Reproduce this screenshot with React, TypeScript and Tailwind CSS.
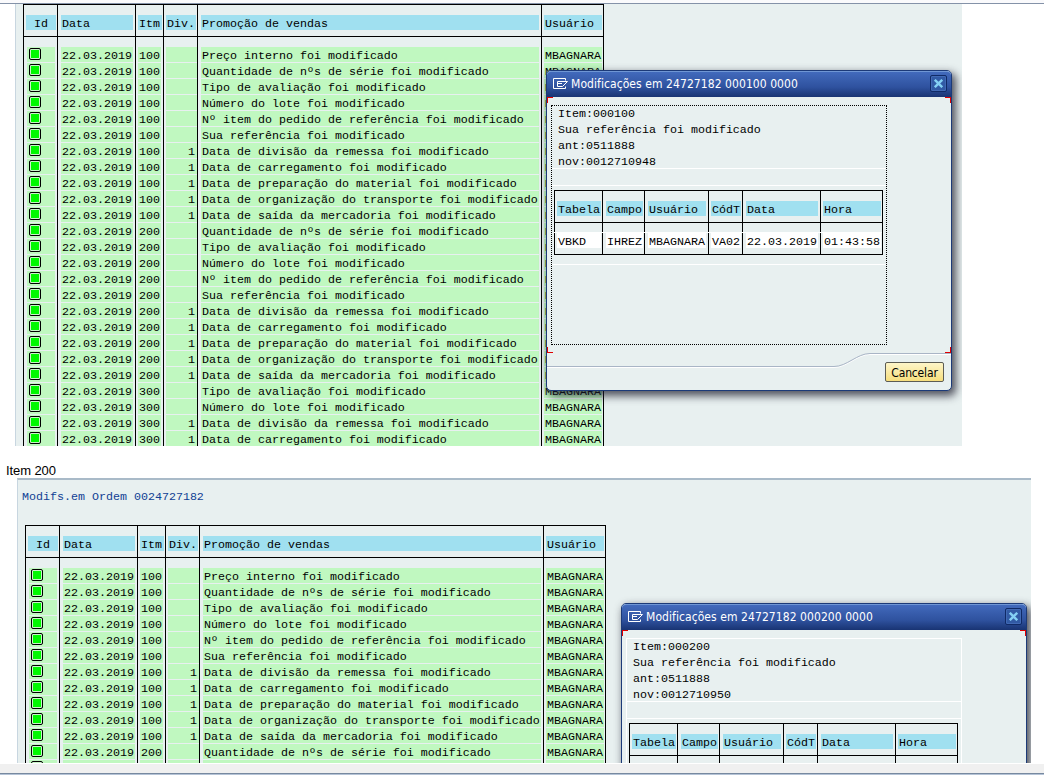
import React from "react";

type Change = { item: string; div: string; text: string };

const GENERAL = [
  "Preço interno foi modificado",
  "Quantidade de nºs de série foi modificado",
  "Tipo de avaliação foi modificado",
  "Número do lote foi modificado",
  "Nº item do pedido de referência foi modificado",
  "Sua referência foi modificado",
];

const SCHEDULE = [
  "Data de divisão da remessa foi modificado",
  "Data de carregamento foi modificado",
  "Data de preparação do material foi modificado",
  "Data de organização do transporte foi modificado",
  "Data de saída da mercadoria foi modificado",
];

const rowsFor = (item: string, general: string[], schedule: string[]): Change[] => [
  ...general.map((text) => ({ item, div: "", text })),
  ...schedule.map((text) => ({ item, div: "1", text })),
];

const ALL: Change[] = [
  ...rowsFor("100", GENERAL, SCHEDULE),
  ...rowsFor("200", GENERAL.slice(1), SCHEDULE),
  ...rowsFor("300", GENERAL.slice(2, 4), SCHEDULE.slice(0, 2)),
];

const MONO =
  "font-['Liberation_Mono','Courier_New',monospace] text-[11.667px] leading-[15px] whitespace-pre text-black";
const UI = "font-['DejaVu_Sans_Condensed','DejaVu_Sans',sans-serif] [font-stretch:condensed]";

function Light() {
  return (
    <div className="-mt-px ml-[2px] flex h-3 w-3 items-center justify-center rounded-[2px] border border-black bg-[#c8f4c8]">
      <div className="h-2 w-2 bg-[#00f800]" />
    </div>
  );
}

type Column = {
  title: string;
  width: string;
  head: string;
  cell: string;
  value: (row: Change) => React.ReactNode;
};

const COLUMNS: Column[] = [
  { title: "Id", width: "w-[34px]", head: "ml-[2px] w-[30px] pl-2", cell: "ml-[3px] w-7", value: () => <Light /> },
  { title: "Data", width: "w-[78px]", head: "ml-[3px] w-[72px] pl-px", cell: "ml-[3px] w-[72px] pl-px", value: () => "22.03.2019" },
  { title: "Itm", width: "w-[28px]", head: "ml-[2px] w-6 pl-px", cell: "ml-[2px] w-[23px] pl-px", value: (r) => r.item },
  { title: "Div.", width: "w-[34px]", head: "ml-[2px] w-[30px] pl-px", cell: "ml-[2px] w-[31px] pr-[2px] text-right", value: (r) => r.div },
  { title: "Promoção de vendas", width: "w-[344px]", head: "ml-[3px] w-[338px] pl-px", cell: "ml-[3px] w-[338px] pl-px", value: (r) => r.text },
  { title: "Usuário", width: "w-[62px]", head: "ml-[2px] w-[58px] pl-px", cell: "ml-[2px] w-[58px] pl-px", value: () => "MBAGNARA" },
];

function ChangeTable({ rows }: { rows: Change[] }) {
  return (
    <div className={`flex w-[581px] border-t border-r border-black ${MONO}`}>
      {COLUMNS.map((c) => (
        <div key={c.title} className={`shrink-0 border-l border-black ${c.width}`}>
          <div className="h-8 border-b border-black pt-[10px]">
            <div className={`h-[15px] bg-[#a0e0f0] ${c.head}`}>
              <div className="pt-[2px]">{c.title}</div>
            </div>
          </div>
          <div className="pt-[10px]">
            {rows.map((r, i) => (
              <div key={i} className={`mb-px h-[15px] bg-[#c0f8c0] ${c.cell}`}>
                <div className="pt-[2px]">{c.value(r)}</div>
              </div>
            ))}
          </div>
        </div>
      ))}
    </div>
  );
}

const DETAIL = [
  { title: "Tabela", value: "VBKD", width: "w-[48px]", cell: "ml-[2px] w-[44px]" },
  { title: "Campo", value: "IHREZ", width: "w-[42px]", cell: "ml-[3px] w-[37px]" },
  { title: "Usuário", value: "MBAGNARA", width: "w-[64px]", cell: "ml-[3px] w-[58px]" },
  { title: "CódT", value: "VA02", width: "w-[34px]", cell: "ml-[2px] w-[30px]" },
  { title: "Data", value: "22.03.2019", width: "w-[78px]", cell: "ml-[3px] w-[72px]" },
  { title: "Hora", value: "01:43:58", width: "w-[62px]", cell: "ml-[2px] w-[58px]" },
];

function DetailTable() {
  return (
    <div className="ml-[2px] flex h-[65px] w-[329px] border-y border-r border-black">
      {DETAIL.map((c) => (
        <div key={c.title} className={`shrink-0 border-l border-black ${c.width}`}>
          <div className="h-8 border-b border-black pt-[10px]">
            <div className={`h-[15px] bg-[#a0e0f0] pt-[2px] pl-px ${c.cell}`}>{c.title}</div>
          </div>
          <div className="mt-[9px] -ml-px h-px bg-white" />
          <div className={`h-[15px] bg-white pt-[2px] pl-px ${c.cell}`}>{c.value}</div>
        </div>
      ))}
    </div>
  );
}

function Dialog({ place, item, value, dotted }: { place: string; item: string; value: string; dotted: boolean }) {
  return (
    <div
      className={`absolute h-[321px] w-[406px] rounded-[5px] border border-[#1c3a78] bg-[#e8f0f0] shadow-[3px_4px_8px_1px_rgba(30,30,45,0.75)] ${place}`}
    >
      <div className="flex h-[26px] items-start rounded-t-[4px] border-t border-[#6f96d4] bg-linear-to-b from-[#426abc] via-[#2f529f] via-60% to-[#193473] pr-[4px] pl-[6px]">
        <svg width="16" height="12" viewBox="0 0 16 12" fill="none" stroke="#fff" className="mt-[6px] shrink-0">
          <path d="M12.5 2.5v-2H.5v10h12v-2M4.5 8.5v-5h10l-5 5zM4 5.5h5" />
        </svg>
        <div className={`mt-[4px] ml-[2px] grow text-[12px] leading-4 tracking-[0.07px] whitespace-pre text-white ${UI}`}>
          {`Modificações em 24727182 000${item} 0000`}
        </div>
        <div className="mt-[3px] flex h-[17px] w-[17px] items-center justify-center rounded-[2px] border border-[#102a66] bg-[#315aa5] shadow-[inset_0_0_0_1px_#4169b4]">
          <svg width="9" height="9" viewBox="0 0 9 9" fill="none" stroke="#84d0f4" strokeWidth="2.4">
            <path d="M.8.8l7.4 7.4M8.2.8L.8 8.2" />
          </svg>
        </div>
      </div>

      <div className="flex h-[256px] flex-col">
        <div className="flex h-[6px] shrink-0 justify-between">
          <div className="w-[6px] border-t border-l border-[#e00000]" />
          <div className="w-[6px] border-t border-r border-[#e00000]" />
        </div>
        <div
          className={`mt-[2px] mb-[2px] ml-[4px] h-[240px] w-[336px] shrink-0 border ${dotted ? "border-dotted border-black" : "border-solid border-white"} ${MONO}`}
        >
          <div className="h-[63px] border-b border-white pl-[6px] leading-4">
            <div>{`Item:000${item}`}</div>
            <div>Sua referência foi modificado</div>
            <div>ant:0511888</div>
            <div>{`nov:${value}`}</div>
          </div>
          <div className="mb-[4px] h-[17px] border-b border-white" />
          <DetailTable />
          <div className="h-[10px] border-b border-white" />
        </div>
        <div className="flex h-[6px] shrink-0 justify-between">
          <div className="w-[6px] border-b border-l border-[#e00000]" />
          <div className="w-[6px] border-r border-b border-[#e00000]" />
        </div>
      </div>

      <div className="relative flex h-[37px] justify-end">
        <svg width="404" height="18" viewBox="0 0 404 18" fill="none" className="absolute top-0 left-0">
          <path d="M0 14.5h287c13 0 23-13 36-13h81" stroke="#fff" />
          <path d="M0 13.5h287c13 0 23-13 36-13h81" stroke="#a9b5c6" />
        </svg>
        <div
          className={`relative mt-[9px] mr-[7px] h-5 w-[59px] rounded-[2px] border border-[#5c5c54] bg-linear-to-b from-[#fdf5c8] to-[#f6de7c] text-center text-[12px] leading-[20px] tracking-[-0.15px] text-black ${UI}`}
        >
          Cancelar
        </div>
      </div>
    </div>
  );
}

export default function App() {
  return (
    <div className="flex h-[775px] w-[1044px] flex-col overflow-hidden bg-white">
      <div className="h-1 shrink-0 border-b border-[#8492a8] bg-[#fafafc]" />
      <div className="relative ml-[15px] h-[442px] w-[947px] shrink-0 overflow-hidden border-l border-[#c8d6e0] bg-[#e8f0f0] pl-[7px]">
        <ChangeTable rows={ALL} />
        <Dialog place="top-[66px] left-[530px]" item="100" value="0012710948" dotted />
      </div>

      <div className="h-8 shrink-0 pt-[17px] pl-[6px] font-['Liberation_Sans',Arial,sans-serif] text-[13px] leading-[15px] tracking-[-0.1px] text-black">
        Item 200
      </div>

      <div className="relative ml-[17px] h-[285px] w-[1014px] shrink-0 overflow-hidden border-t-2 border-l border-t-[#a9bac8] border-l-[#c8d6e0] bg-[#e8f0f0] pl-[7px]">
        <div className={`-ml-[3px] h-[45px] pt-[10px] ${MONO}`}>
          <span className="text-[#103f94]">Modifs.em Ordem 0024727182</span>
        </div>
        <ChangeTable rows={ALL.slice(0, 13)} />
        <Dialog place="top-[123px] left-[603px]" item="200" value="0012710950" dotted={false} />
      </div>

      <div className="h-[10px] shrink-0 border-t border-white bg-[#f0f0f0]" />
      <div className="h-[2px] shrink-0 border-t border-[#7789a0] bg-[#b5c3d6]" />
    </div>
  );
}
